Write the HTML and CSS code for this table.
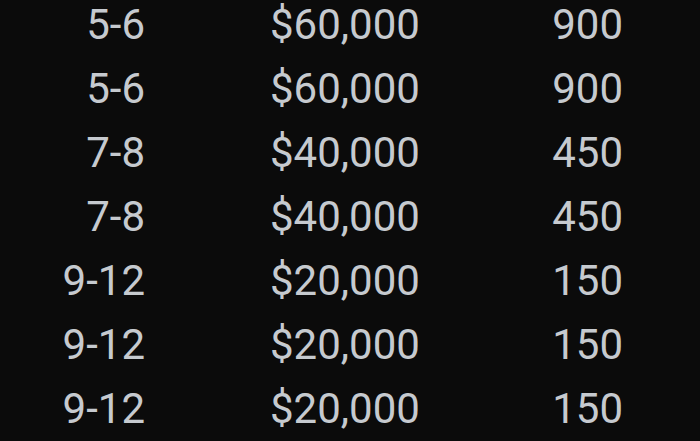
FILE: index.html
```html
<!DOCTYPE html>
<html>
<head>
<meta charset="utf-8">
<link rel="stylesheet" href="styles.css">
</head>
<body>
<div class="table">
  <div class="row"><span class="rank">5-6</span><span class="prize">$60,000</span><span class="pts">900</span></div>
  <div class="row"><span class="rank">5-6</span><span class="prize">$60,000</span><span class="pts">900</span></div>
  <div class="row"><span class="rank">7-8</span><span class="prize">$40,000</span><span class="pts">450</span></div>
  <div class="row"><span class="rank">7-8</span><span class="prize">$40,000</span><span class="pts">450</span></div>
  <div class="row"><span class="rank">9-12</span><span class="prize">$20,000</span><span class="pts">150</span></div>
  <div class="row"><span class="rank">9-12</span><span class="prize">$20,000</span><span class="pts">150</span></div>
  <div class="row"><span class="rank">9-12</span><span class="prize">$20,000</span><span class="pts">150</span></div>
</div>
</body>
</html>
```
FILE: styles.css
```css
html, body {
  margin: 0;
  padding: 0;
  background: #0b0b0b;
  overflow: hidden;
}
body {
  width: 700px;
  height: 441px;
  font-family: Roboto, "Noto Sans", sans-serif;
  font-size: 42px;
  color: #c6cacf;
}
.table {
  margin-top: -7px;
  display: flex;
  flex-direction: column;
}
.row {
  display: grid;
  grid-template-columns: 145px 125px 153px 200px;
  height: 64px;
  line-height: 64px;
}
.rank {
  text-align: right;
}
.prize {
  grid-column: 3;
  text-align: left;
  white-space: nowrap;
}
.pts {
  grid-column: 4;
  text-align: right;
}
```
